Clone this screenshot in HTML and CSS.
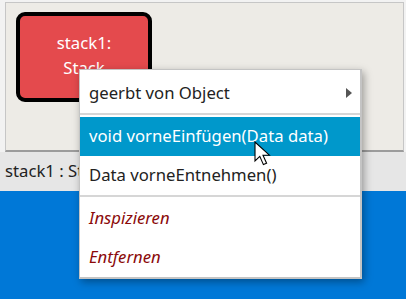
FILE: index.html
```html
<!DOCTYPE html>
<html lang="en">
<head>
    <meta charset="UTF-8">
    <title>stack1 : Stack</title>
    <link rel="stylesheet" href="styles.css">
</head>
<body>
    <div class="window">
        <!-- Object bench -->
        <div class="bench">
            <div class="object-card">
                <span>stack1:</span>
                <span>Stack</span>
            </div>
        </div>
        <div class="status">stack1 : Stack</div>
    </div>
    <div class="desktop"></div>

    <!-- Context menu -->
    <div class="menu">
        <div class="menu-item has-sub">geerbt von Object<span class="arrow"></span></div>
        <div class="separator"></div>
        <div class="menu-item active">void vorneEinfügen(Data data)</div>
        <div class="menu-item">Data vorneEntnehmen()</div>
        <div class="separator"></div>
        <div class="menu-item action">Inspizieren</div>
        <div class="menu-item action">Entfernen</div>
    </div>

    <svg class="cursor" width="18" height="26" viewBox="0 0 18 26">
        <path d="M1 1 L1 20 L5.8 15.4 L9.4 23.6 L12.6 22.2 L9 14.2 L15.4 14.2 Z" fill="#fff" stroke="#000" stroke-width="1.1" stroke-linejoin="miter"/>
    </svg>
</body>
</html>
```

FILE: styles.css
```css
body {
    margin: 0;
    width: 406px;
    height: 299px;
    overflow: hidden;
    position: relative;
    font-family: "Noto Sans", "Open Sans", sans-serif;
    font-size: 16.7px;
    background-color: #0078d7;
}

.window {
    background-color: #f2f2f2;
    padding: 2px 2px 0 5px;
}

.bench {
    height: 150px;
    background-color: #edebe6;
    border: 1px solid #c6c6c6;
    border-bottom: 2px solid #9c9c9c;
    padding: 9px 0 0 10px;
    box-sizing: border-box;
}

.object-card {
    width: 136px;
    height: 90px;
    box-sizing: border-box;
    border: 4px solid #000;
    border-radius: 9px;
    background-color: #e44a4d;
    color: #fff;
    display: flex;
    flex-direction: column;
    justify-content: center;
    align-items: center;
    line-height: 25px;
    padding-bottom: 4px;
}

.status {
    height: 39px;
    margin: 0 -2px 0 -5px;
    padding-left: 5px;
    background-color: #e6e6e6;
    color: #222;
    line-height: 38px;
}

.desktop {
    height: 108px;
}

.menu {
    position: absolute;
    left: 79px;
    top: 69px;
    width: 283px;
    height: 210px;
    box-sizing: border-box;
    background: #fff;
    border: 1px solid #c4c4c4;
    border-right-width: 2px;
    border-bottom-width: 2px;
    box-shadow: 2px 3px 8px rgba(0, 0, 0, 0.35);
    padding-top: 4px;
}

.menu-item {
    height: 39px;
    line-height: 38px;
    padding-left: 9px;
    color: #222;
    position: relative;
    white-space: nowrap;
}

.menu-item.active {
    background-color: #0098cb;
    color: #fff;
}

.menu-item.action {
    font-style: italic;
    color: #8b0a0a;
}

.arrow {
    position: absolute;
    right: 8px;
    top: 14px;
    width: 0;
    height: 0;
    border-top: 5px solid transparent;
    border-bottom: 5px solid transparent;
    border-left: 6px solid #555;
}

.separator {
    height: 2px;
    background-color: #d6d6d6;
    margin-bottom: 2px;
}

.cursor {
    position: absolute;
    left: 254px;
    top: 141px;
}
```
